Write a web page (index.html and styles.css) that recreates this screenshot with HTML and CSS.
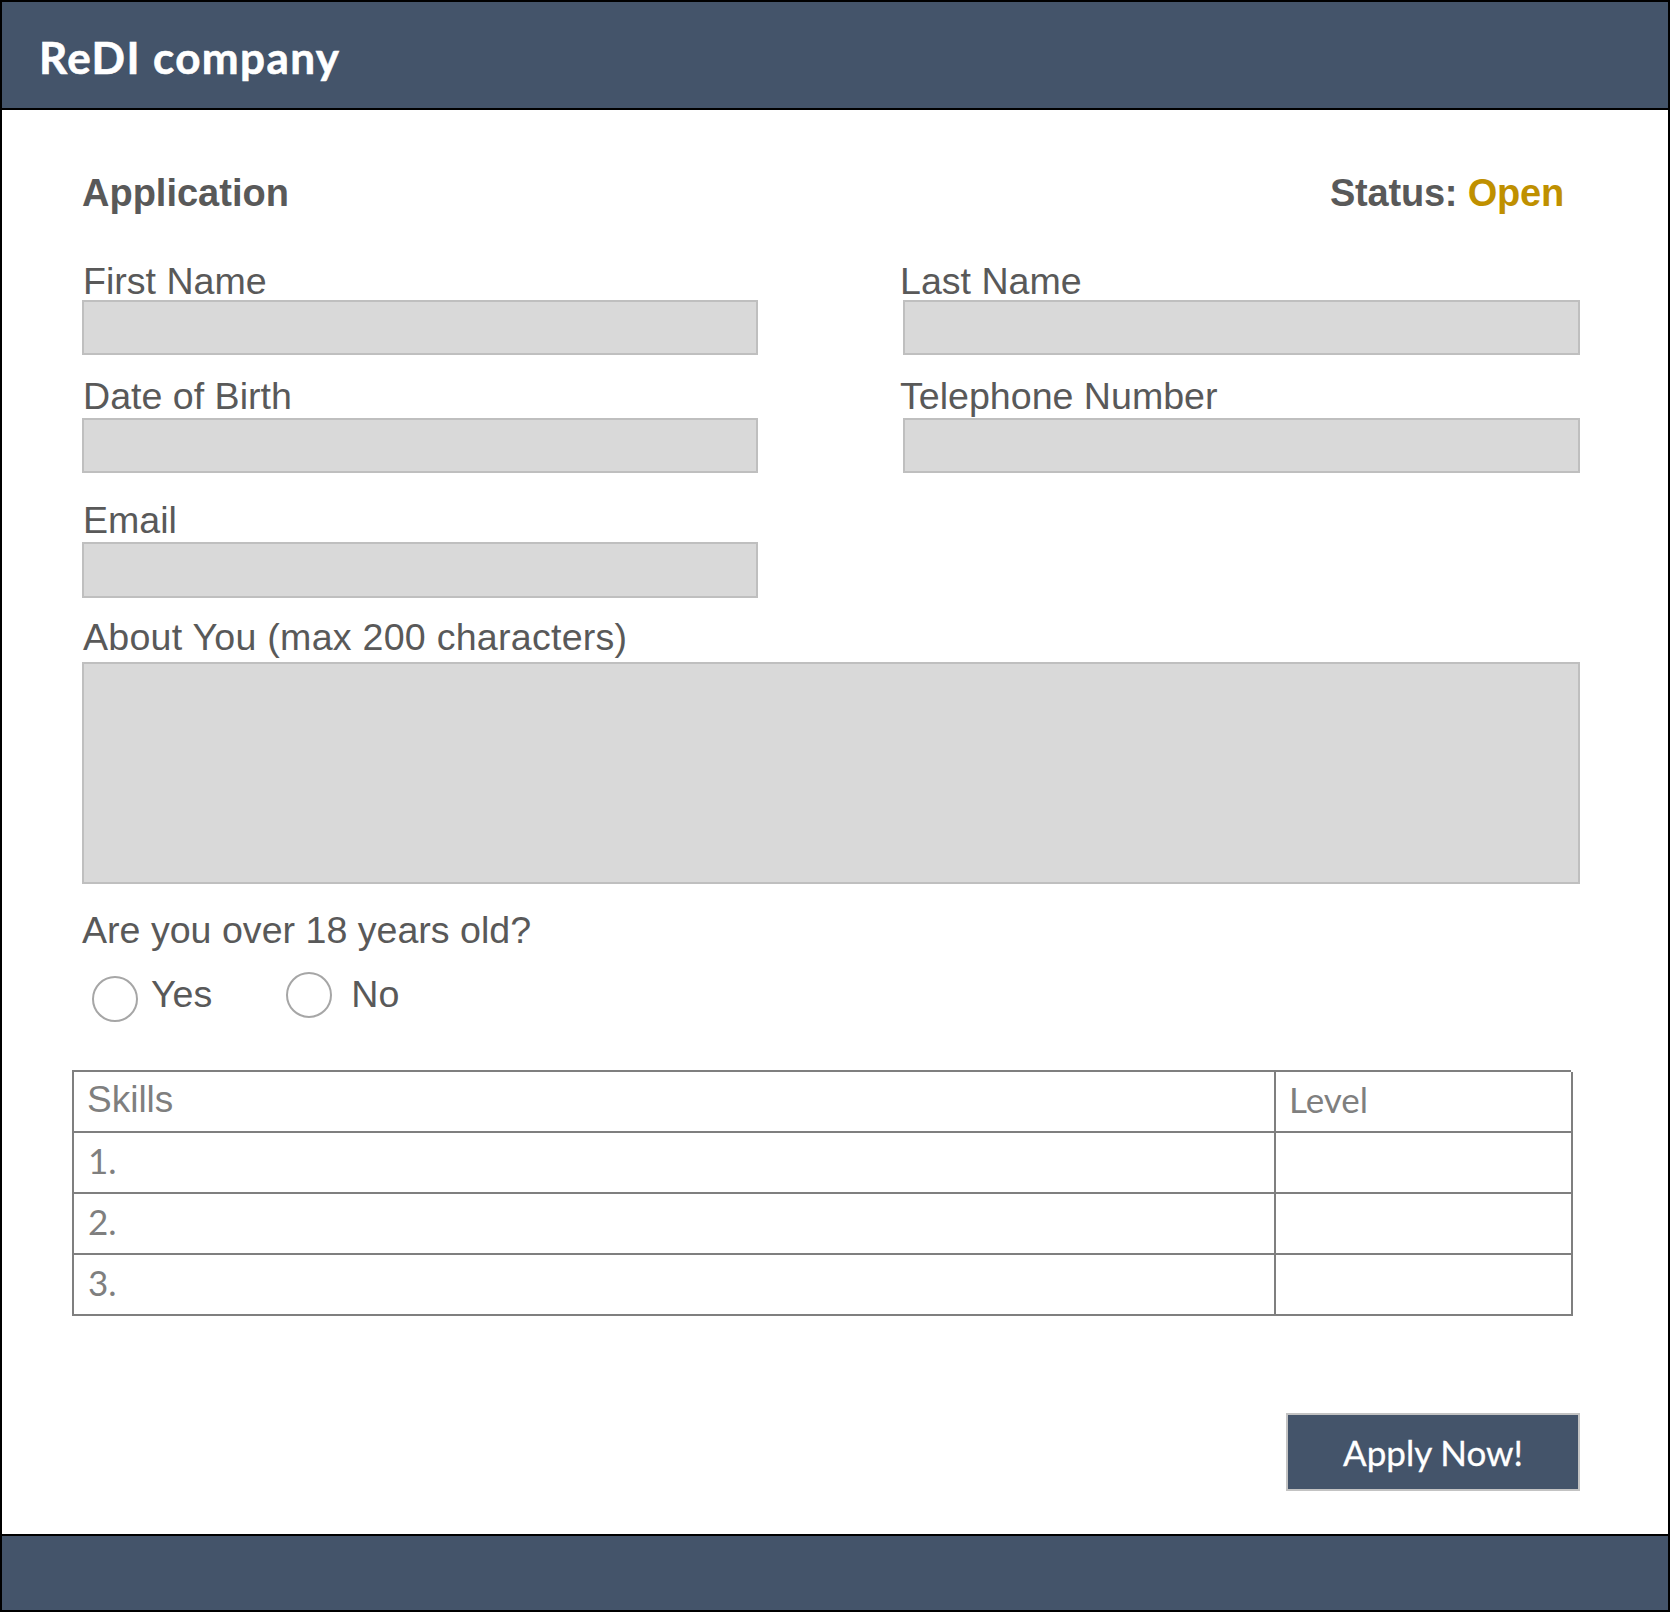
FILE: index.html
```html
<!DOCTYPE html>
<html lang="en">
<head>
<meta charset="utf-8">
<title>ReDI company – Application</title>
<link rel="stylesheet" href="styles.css">
</head>
<body>
<div class="frame">
  <header class="topbar">
    <h1 class="brand">ReDI company</h1>
  </header>
  <main class="content">
    <div class="title-row">
      <h2 class="title">Application</h2>
      <div class="status">Status: <span class="status-open">Open</span></div>
    </div>
    <div class="fields">
      <div class="field">
        <label class="label">First Name</label>
        <div class="box box-tight"></div>
      </div>
      <div class="field field-right">
        <label class="label">Last Name</label>
        <div class="box box-tight"></div>
      </div>
      <div class="field row2">
        <label class="label">Date of Birth</label>
        <div class="box"></div>
      </div>
      <div class="field field-right row2">
        <label class="label">Telephone Number</label>
        <div class="box"></div>
      </div>
      <div class="field row3">
        <label class="label">Email</label>
        <div class="box box-tall"></div>
      </div>
      <div class="field field-wide row4">
        <label class="label label-about">About You (max 200 characters)</label>
        <div class="box box-area"></div>
      </div>
    </div>
    <div class="question">Are you over 18 years old?</div>
    <div class="radios">
      <div class="radio radio-yes">
        <span class="circle"></span>
        <span class="radio-text">Yes</span>
      </div>
      <div class="radio radio-no">
        <span class="circle"></span>
        <span class="radio-text">No</span>
      </div>
    </div>
    <div class="skills">
      <div class="cell cell-head">Skills</div>
      <div class="cell cell-level">Level</div>
      <div class="cell cell-num">1.</div>
      <div class="cell"></div>
      <div class="cell cell-num">2.</div>
      <div class="cell"></div>
      <div class="cell cell-num">3.</div>
      <div class="cell"></div>
    </div>
    <div class="actions">
      <button class="apply" type="button">Apply Now!</button>
    </div>
  </main>
  <footer class="footbar"></footer>
</div>
</body>
</html>
```
FILE: styles.css
```css
* { box-sizing: border-box; }

html, body {
  margin: 0;
  padding: 0;
  background: #ffffff;
}

body {
  font-family: "Liberation Sans", Arial, sans-serif;
  color: #595959;
}

.frame {
  width: 1670px;
  height: 1612px;
  border: 2px solid #000;
  display: flex;
  flex-direction: column;
  background: #fff;
}

.topbar {
  height: 108px;
  flex: none;
  background: #44546a;
  border-bottom: 2px solid #000;
  display: flex;
  align-items: center;
  padding: 4px 0 0 37px;
}

.brand {
  margin: 0;
  font-family: Lato, "Open Sans", sans-serif;
  font-weight: 700;
  font-size: 44px;
  letter-spacing: 1.4px;
  line-height: 50px;
  color: #ffffff;
  -webkit-text-stroke: 0.6px #ffffff;
}

.content {
  flex: 1;
  padding: 62px 88px 0 80px;
  display: flex;
  flex-direction: column;
}

.title-row {
  display: flex;
  justify-content: space-between;
  align-items: baseline;
  padding: 0 16px 0 0;
  height: 42px;
}

.title, .status {
  margin: 0;
  font-size: 38px;
  line-height: 42px;
  font-weight: 700;
  color: #595959;
}

.status { letter-spacing: -0.2px; }

.status-open { color: #bf9000; }

.fields {
  display: grid;
  grid-template-columns: 676px 677px;
  column-gap: 145px;
  margin-top: 48px;
}

.field {
  display: flex;
  flex-direction: column;
}

.field-wide { grid-column: 1 / -1; }

.row2 { margin-top: 22px; }
.row3 { margin-top: 28px; }
.row4 { margin-top: 20px; }

.label {
  display: block;
  font-size: 37.6px;
  line-height: 38px;
  padding-left: 1px;
  color: #595959;
  white-space: nowrap;
}

.label-about { letter-spacing: 0.25px; }

.field-right .label { margin-left: -4px; }

.box {
  height: 55px;
  margin-top: 3px;
  background: #d9d9d9;
  border: 2px solid #bfbfbf;
}

.box-tight { margin-top: 0; }
.box-tall { height: 56px; }
.box-area { height: 222px; margin-top: 6px; }

.question {
  margin-top: 27px;
  padding-left: 0;
  font-size: 37.6px;
  line-height: 38px;
  color: #595959;
}

.radios {
  display: flex;
  align-items: flex-start;
  margin-top: 23px;
  padding-left: 10px;
}

.radio {
  display: flex;
  align-items: flex-start;
}

.radio-no { margin-left: 74px; }

.circle {
  width: 46px;
  height: 46px;
  border: 2px solid #a6a6a6;
  border-radius: 50%;
  flex: none;
}

.radio-yes .circle { margin-top: 4px; }

.radio-text {
  margin-top: 3px;
  font-size: 37.6px;
  line-height: 38px;
  color: #595959;
}

.radio-yes .radio-text { margin-left: 13px; }
.radio-no .radio-text { margin-left: 19px; }

.skills {
  margin-top: 48px;
  margin-left: -10px;
  width: 1499px;
  display: grid;
  grid-template-columns: 1202px 297px;
  grid-auto-rows: 61px;
  border-top: 2px solid #7f7f7f;
  border-left: 2px solid #7f7f7f;
}

.cell {
  border-right: 2px solid #7f7f7f;
  border-bottom: 2px solid #7f7f7f;
  display: flex;
  align-items: center;
  padding-left: 13px;
  color: #7f7f7f;
}

.cell-head {
  font-family: "Liberation Sans", Arial, sans-serif;
  font-size: 37px;
  line-height: 42px;
  padding-bottom: 3px;
}

.cell-level, .cell-num {
  font-family: Lato, "Open Sans", sans-serif;
  font-size: 35px;
  line-height: 42px;
  padding-bottom: 5px;
}

.cell-level { padding-left: 13px; }
.cell-num { padding-left: 14px; }

.actions {
  display: flex;
  justify-content: flex-end;
  margin-top: 97px;
}

.apply {
  width: 294px;
  height: 78px;
  background: #44546a;
  border: 2px solid #c3c3c3;
  color: #ffffff;
  font-family: Lato, "Open Sans", sans-serif;
  font-size: 35px;
  line-height: 42px;
  -webkit-text-stroke: 0.3px #ffffff;
  padding: 0;
  margin: 0;
}

.footbar {
  flex: none;
  height: 76px;
  background: #44546a;
  border-top: 2px solid #000;
}
```
